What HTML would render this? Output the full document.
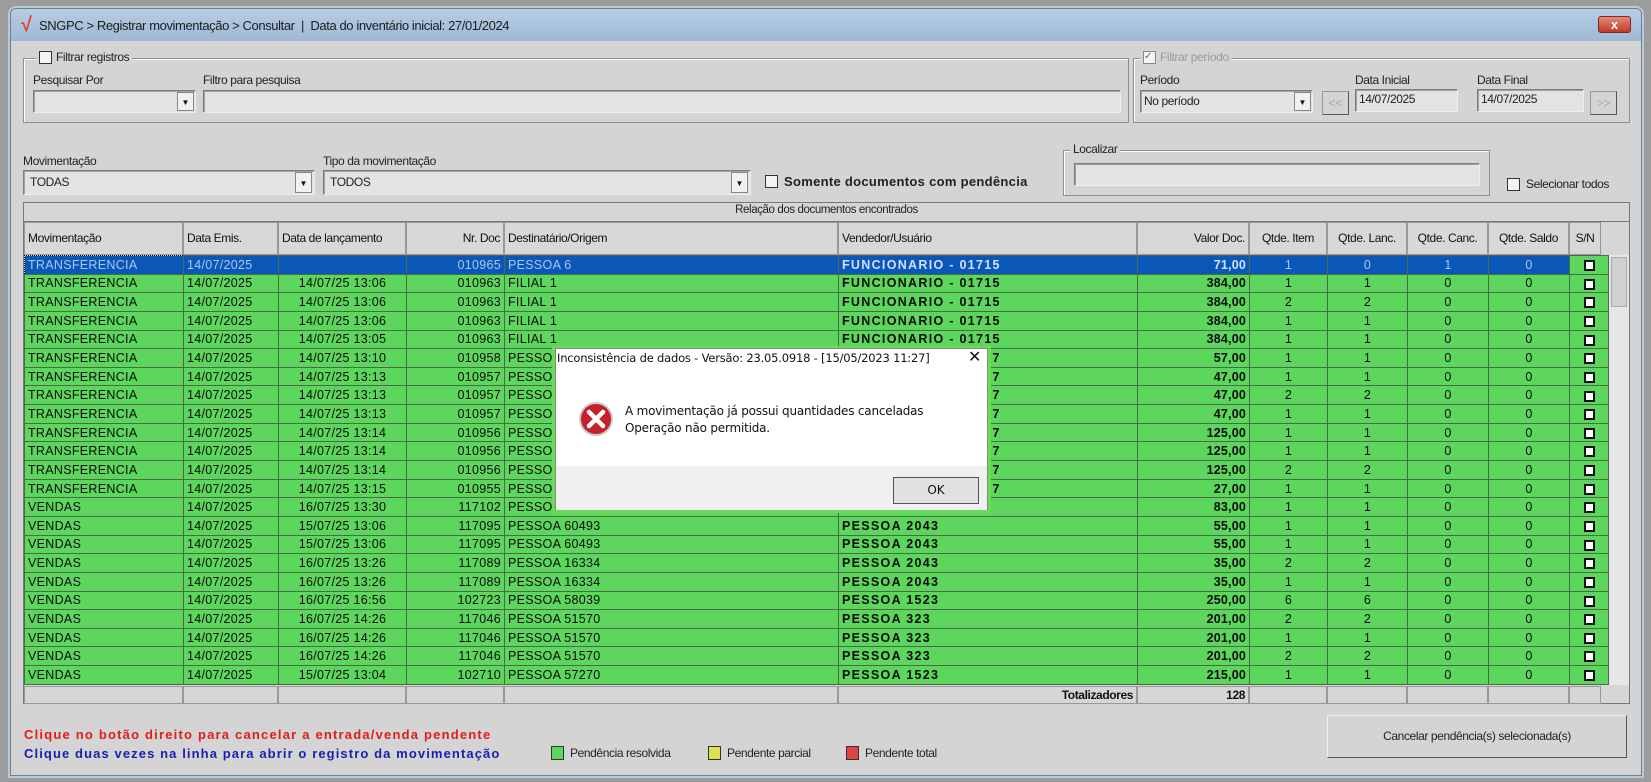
<!DOCTYPE html>
<html><head><meta charset="utf-8"><style>
*{box-sizing:border-box;margin:0;padding:0}
body{width:1651px;height:782px;background:#9c9c9c;position:relative;overflow:hidden;font-family:"Liberation Sans",sans-serif;font-size:12px;color:#111}
.a{position:absolute}
#win{left:10px;top:8px;width:1632px;height:768px;background:#d4d4d4;border:1px solid #6e7f90;border-radius:6px 6px 0 0;box-shadow:0 0 0 2px #b9c9d8}
#title{left:0;top:0;width:100%;height:32px;background:linear-gradient(#b9cde4,#9db8d6);border-radius:5px 5px 0 0}
.lbl{font-size:12px;letter-spacing:-.4px;color:#222;white-space:nowrap}
.grp{border:1px solid #8f8f8f;box-shadow:inset 1px 1px 0 #fff}
.box{background:#e3e3e3;border:1px solid #7d7d7d;border-right-color:#eee;border-bottom-color:#eee;box-shadow:inset 1px 1px 0 #a0a0a0}
.dd{background:#f1f1f1;border:1px solid #888;width:17px;font-size:8px;text-align:center}
.cb{width:13px;height:13px;border:1px solid #333;background:#f4f4f4}
table{border-collapse:collapse;table-layout:fixed;font-size:12.5px}
td{height:18.65px;border:1px solid #4a6a4a;padding:0 3px;white-space:nowrap;overflow:hidden;line-height:16px;letter-spacing:.3px;color:#0a0a0a}
tr.g td{background:#5cd65c}
tr.s td{background:#0b57b8;color:#a9c8f0}
td.r{text-align:right}td.c{text-align:center}td.b{font-weight:bold;letter-spacing:1.3px}
td.r.b{letter-spacing:.2px}
td.sn{background:#5cd65c!important;text-align:center;padding:0}
.sq{display:inline-block;width:11px;height:11px;border:2px solid #111;background:#fff;vertical-align:middle}
.hd{background:#d8d8d8;border:1px solid #999;font-size:12px;letter-spacing:-.4px;line-height:30px;padding:0 3px;white-space:nowrap;overflow:hidden}
</style></head><body>
<div id="win" class="a">
 <div id="title" class="a">
  <div class="a" style="left:10px;top:6px;color:#e2462b;font-size:20px;font-weight:bold;line-height:20px">√</div>
  <div class="a lbl" style="left:28px;top:9px;font-size:13px;color:#1d1d1d">SNGPC &gt; Registrar movimentação &gt; Consultar &nbsp;| &nbsp;Data do inventário inicial: 27/01/2024</div>
  <div class="a" style="left:1587px;top:7px;width:33px;height:17px;background:linear-gradient(#e48a7a,#c0392b);border:1px solid #7a2a20;border-radius:3px;color:#fff;font-weight:bold;text-align:center;line-height:15px;font-size:13px">x</div>
 </div>
</div>
<div class="a grp" style="left:23px;top:58px;width:1106px;height:65px"></div>
<div class="a" style="left:36px;top:50px;background:#d4d4d4;padding:0 3px;display:flex;gap:4px;align-items:center"><div class="cb"></div><span class="lbl">Filtrar registros</span></div>
<div class="a lbl" style="left:33px;top:73px">Pesquisar Por</div>
<div class="a box" style="left:33px;top:90px;width:163px;height:23px"></div>
<div class="a dd" style="left:177px;top:92px;height:19px;line-height:19px">▼</div>
<div class="a lbl" style="left:203px;top:73px">Filtro para pesquisa</div>
<div class="a box" style="left:203px;top:90px;width:918px;height:23px"></div>
<div class="a grp" style="left:1133px;top:58px;width:497px;height:65px"></div>
<div class="a" style="left:1140px;top:50px;background:#d4d4d4;padding:0 3px;display:flex;gap:4px;align-items:center"><div class="cb" style="border-color:#888;font-size:10px;line-height:10px;color:#666">✓</div><span class="lbl" style="color:#9a9a9a">Filtrar período</span></div>
<div class="a lbl" style="left:1140px;top:73px">Período</div>
<div class="a box" style="left:1140px;top:90px;width:173px;height:23px;padding:3px 3px" ><span class="lbl">No período</span></div>
<div class="a dd" style="left:1294px;top:92px;height:19px;line-height:19px">▼</div>
<div class="a" style="left:1322px;top:91px;width:27px;height:24px;border:1px solid #999;border-right-color:#555;border-bottom-color:#555;color:#aaa;text-align:center;line-height:22px">&lt;&lt;</div>
<div class="a lbl" style="left:1355px;top:73px">Data Inicial</div>
<div class="a box" style="left:1355px;top:89px;width:103px;height:23px;padding:2px 3px"><span class="lbl">14/07/2025</span></div>
<div class="a lbl" style="left:1477px;top:73px">Data Final</div>
<div class="a box" style="left:1477px;top:89px;width:107px;height:23px;padding:2px 3px"><span class="lbl">14/07/2025</span></div>
<div class="a" style="left:1590px;top:91px;width:27px;height:24px;border:1px solid #999;border-right-color:#555;border-bottom-color:#555;color:#aaa;text-align:center;line-height:22px">&gt;&gt;</div>
<div class="a lbl" style="left:23px;top:154px">Movimentação</div>
<div class="a box" style="left:23px;top:170px;width:292px;height:25px;padding:4px 6px"><span class="lbl">TODAS</span></div>
<div class="a dd" style="left:295px;top:172px;height:21px;line-height:21px">▼</div>
<div class="a lbl" style="left:323px;top:154px">Tipo da movimentação</div>
<div class="a box" style="left:323px;top:170px;width:428px;height:25px;padding:4px 6px"><span class="lbl">TODOS</span></div>
<div class="a dd" style="left:731px;top:172px;height:21px;line-height:21px">▼</div>
<div class="a cb" style="left:765px;top:175px"></div>
<div class="a lbl" style="left:784px;top:174px;font-weight:bold;font-size:13px;letter-spacing:.3px">Somente documentos com pendência</div>
<div class="a grp" style="left:1063px;top:150px;width:427px;height:46px"></div>
<div class="a lbl" style="left:1070px;top:142px;background:#d4d4d4;padding:0 3px">Localizar</div>
<div class="a box" style="left:1074px;top:163px;width:406px;height:23px"></div>
<div class="a cb" style="left:1507px;top:178px"></div>
<div class="a lbl" style="left:1526px;top:177px">Selecionar todos</div>
<div class="a" style="left:23px;top:202px;width:1607px;height:502px;border:1px solid #777;background:#d6d6d6"></div>
<div class="a lbl" style="left:23px;top:204px;width:1607px;text-align:center;font-size:11.5px">Relação dos documentos encontrados</div>
<div class="a" style="left:23px;top:221px;width:1607px;height:1px;background:#777"></div>
<div class="a" style="left:24px;top:222px;display:flex;height:33px">
<div class="hd" style="width:159px">Movimentação</div><div class="hd" style="width:95px">Data Emis.</div><div class="hd" style="width:128px">Data de lançamento</div><div class="hd" style="width:98px;text-align:right">Nr. Doc</div><div class="hd" style="width:334px">Destinatário/Origem</div><div class="hd" style="width:299px">Vendedor/Usuário</div><div class="hd" style="width:112px;text-align:right">Valor Doc.</div><div class="hd" style="width:78px;text-align:center">Qtde. Item</div><div class="hd" style="width:80px;text-align:center">Qtde. Lanc.</div><div class="hd" style="width:81px;text-align:center">Qtde. Canc.</div><div class="hd" style="width:81px;text-align:center">Qtde. Saldo</div><div class="hd" style="width:32px;text-align:center">S/N</div>
</div>
<div class="a" style="left:1608px;top:255px;width:21px;height:430px;background:#e6e6e6;border-left:1px solid #bbb"><div style="margin:2px;height:50px;background:#d0d0d0;border:1px solid #aaa"></div></div>
<table class="a" style="left:24px;top:255px;width:1584px">
<colgroup><col style="width:159px"><col style="width:95px"><col style="width:128px"><col style="width:98px"><col style="width:334px"><col style="width:299px"><col style="width:112px"><col style="width:78px"><col style="width:80px"><col style="width:81px"><col style="width:81px"><col style="width:39px"></colgroup>
<tr class="s"><td style="border:1px dotted #000">TRANSFERENCIA</td><td>14/07/2025</td><td></td><td class="r">010965</td><td>PESSOA 6</td><td class="b" style="color:#cfe0ff">FUNCIONARIO - 01715</td><td class="r b" style="color:#cfe0ff">71,00</td><td class="c">1</td><td class="c">0</td><td class="c">1</td><td class="c">0</td><td class="sn"><span class="sq"></span></td></tr>
<tr class="g"><td>TRANSFERENCIA</td><td>14/07/2025</td><td class="c">14/07/25 13:06</td><td class="r">010963</td><td>FILIAL 1</td><td class="b">FUNCIONARIO - 01715</td><td class="r b">384,00</td><td class="c">1</td><td class="c">1</td><td class="c">0</td><td class="c">0</td><td class="sn"><span class="sq"></span></td></tr>
<tr class="g"><td>TRANSFERENCIA</td><td>14/07/2025</td><td class="c">14/07/25 13:06</td><td class="r">010963</td><td>FILIAL 1</td><td class="b">FUNCIONARIO - 01715</td><td class="r b">384,00</td><td class="c">2</td><td class="c">2</td><td class="c">0</td><td class="c">0</td><td class="sn"><span class="sq"></span></td></tr>
<tr class="g"><td>TRANSFERENCIA</td><td>14/07/2025</td><td class="c">14/07/25 13:06</td><td class="r">010963</td><td>FILIAL 1</td><td class="b">FUNCIONARIO - 01715</td><td class="r b">384,00</td><td class="c">1</td><td class="c">1</td><td class="c">0</td><td class="c">0</td><td class="sn"><span class="sq"></span></td></tr>
<tr class="g"><td>TRANSFERENCIA</td><td>14/07/2025</td><td class="c">14/07/25 13:05</td><td class="r">010963</td><td>FILIAL 1</td><td class="b">FUNCIONARIO - 01715</td><td class="r b">384,00</td><td class="c">1</td><td class="c">1</td><td class="c">0</td><td class="c">0</td><td class="sn"><span class="sq"></span></td></tr>
<tr class="g"><td>TRANSFERENCIA</td><td>14/07/2025</td><td class="c">14/07/25 13:10</td><td class="r">010958</td><td>PESSOA 1</td><td class="b">FUNCIONARIO - 01587</td><td class="r b">57,00</td><td class="c">1</td><td class="c">1</td><td class="c">0</td><td class="c">0</td><td class="sn"><span class="sq"></span></td></tr>
<tr class="g"><td>TRANSFERENCIA</td><td>14/07/2025</td><td class="c">14/07/25 13:13</td><td class="r">010957</td><td>PESSOA 1</td><td class="b">FUNCIONARIO - 01587</td><td class="r b">47,00</td><td class="c">1</td><td class="c">1</td><td class="c">0</td><td class="c">0</td><td class="sn"><span class="sq"></span></td></tr>
<tr class="g"><td>TRANSFERENCIA</td><td>14/07/2025</td><td class="c">14/07/25 13:13</td><td class="r">010957</td><td>PESSOA 1</td><td class="b">FUNCIONARIO - 01587</td><td class="r b">47,00</td><td class="c">2</td><td class="c">2</td><td class="c">0</td><td class="c">0</td><td class="sn"><span class="sq"></span></td></tr>
<tr class="g"><td>TRANSFERENCIA</td><td>14/07/2025</td><td class="c">14/07/25 13:13</td><td class="r">010957</td><td>PESSOA 1</td><td class="b">FUNCIONARIO - 01587</td><td class="r b">47,00</td><td class="c">1</td><td class="c">1</td><td class="c">0</td><td class="c">0</td><td class="sn"><span class="sq"></span></td></tr>
<tr class="g"><td>TRANSFERENCIA</td><td>14/07/2025</td><td class="c">14/07/25 13:14</td><td class="r">010956</td><td>PESSOA 1</td><td class="b">FUNCIONARIO - 01587</td><td class="r b">125,00</td><td class="c">1</td><td class="c">1</td><td class="c">0</td><td class="c">0</td><td class="sn"><span class="sq"></span></td></tr>
<tr class="g"><td>TRANSFERENCIA</td><td>14/07/2025</td><td class="c">14/07/25 13:14</td><td class="r">010956</td><td>PESSOA 1</td><td class="b">FUNCIONARIO - 01587</td><td class="r b">125,00</td><td class="c">1</td><td class="c">1</td><td class="c">0</td><td class="c">0</td><td class="sn"><span class="sq"></span></td></tr>
<tr class="g"><td>TRANSFERENCIA</td><td>14/07/2025</td><td class="c">14/07/25 13:14</td><td class="r">010956</td><td>PESSOA 1</td><td class="b">FUNCIONARIO - 01587</td><td class="r b">125,00</td><td class="c">2</td><td class="c">2</td><td class="c">0</td><td class="c">0</td><td class="sn"><span class="sq"></span></td></tr>
<tr class="g"><td>TRANSFERENCIA</td><td>14/07/2025</td><td class="c">14/07/25 13:15</td><td class="r">010955</td><td>PESSOA 1</td><td class="b">FUNCIONARIO - 01587</td><td class="r b">27,00</td><td class="c">1</td><td class="c">1</td><td class="c">0</td><td class="c">0</td><td class="sn"><span class="sq"></span></td></tr>
<tr class="g"><td>VENDAS</td><td>14/07/2025</td><td class="c">16/07/25 13:30</td><td class="r">117102</td><td>PESSOA 27034</td><td class="b">PESSOA 2043</td><td class="r b">83,00</td><td class="c">1</td><td class="c">1</td><td class="c">0</td><td class="c">0</td><td class="sn"><span class="sq"></span></td></tr>
<tr class="g"><td>VENDAS</td><td>14/07/2025</td><td class="c">15/07/25 13:06</td><td class="r">117095</td><td>PESSOA 60493</td><td class="b">PESSOA 2043</td><td class="r b">55,00</td><td class="c">1</td><td class="c">1</td><td class="c">0</td><td class="c">0</td><td class="sn"><span class="sq"></span></td></tr>
<tr class="g"><td>VENDAS</td><td>14/07/2025</td><td class="c">15/07/25 13:06</td><td class="r">117095</td><td>PESSOA 60493</td><td class="b">PESSOA 2043</td><td class="r b">55,00</td><td class="c">1</td><td class="c">1</td><td class="c">0</td><td class="c">0</td><td class="sn"><span class="sq"></span></td></tr>
<tr class="g"><td>VENDAS</td><td>14/07/2025</td><td class="c">16/07/25 13:26</td><td class="r">117089</td><td>PESSOA 16334</td><td class="b">PESSOA 2043</td><td class="r b">35,00</td><td class="c">2</td><td class="c">2</td><td class="c">0</td><td class="c">0</td><td class="sn"><span class="sq"></span></td></tr>
<tr class="g"><td>VENDAS</td><td>14/07/2025</td><td class="c">16/07/25 13:26</td><td class="r">117089</td><td>PESSOA 16334</td><td class="b">PESSOA 2043</td><td class="r b">35,00</td><td class="c">1</td><td class="c">1</td><td class="c">0</td><td class="c">0</td><td class="sn"><span class="sq"></span></td></tr>
<tr class="g"><td>VENDAS</td><td>14/07/2025</td><td class="c">16/07/25 16:56</td><td class="r">102723</td><td>PESSOA 58039</td><td class="b">PESSOA 1523</td><td class="r b">250,00</td><td class="c">6</td><td class="c">6</td><td class="c">0</td><td class="c">0</td><td class="sn"><span class="sq"></span></td></tr>
<tr class="g"><td>VENDAS</td><td>14/07/2025</td><td class="c">16/07/25 14:26</td><td class="r">117046</td><td>PESSOA 51570</td><td class="b">PESSOA 323</td><td class="r b">201,00</td><td class="c">2</td><td class="c">2</td><td class="c">0</td><td class="c">0</td><td class="sn"><span class="sq"></span></td></tr>
<tr class="g"><td>VENDAS</td><td>14/07/2025</td><td class="c">16/07/25 14:26</td><td class="r">117046</td><td>PESSOA 51570</td><td class="b">PESSOA 323</td><td class="r b">201,00</td><td class="c">1</td><td class="c">1</td><td class="c">0</td><td class="c">0</td><td class="sn"><span class="sq"></span></td></tr>
<tr class="g"><td>VENDAS</td><td>14/07/2025</td><td class="c">16/07/25 14:26</td><td class="r">117046</td><td>PESSOA 51570</td><td class="b">PESSOA 323</td><td class="r b">201,00</td><td class="c">2</td><td class="c">2</td><td class="c">0</td><td class="c">0</td><td class="sn"><span class="sq"></span></td></tr>
<tr class="g"><td>VENDAS</td><td>14/07/2025</td><td class="c">15/07/25 13:04</td><td class="r">102710</td><td>PESSOA 57270</td><td class="b">PESSOA 1523</td><td class="r b">215,00</td><td class="c">1</td><td class="c">1</td><td class="c">0</td><td class="c">0</td><td class="sn"><span class="sq"></span></td></tr>
</table>
<div class="a" style="left:24px;top:686px;display:flex;height:18px">
<div class="hd" style="width:159px;line-height:16px;background:#d6d6d6"></div><div class="hd" style="width:95px;background:#d6d6d6"></div><div class="hd" style="width:128px;background:#d6d6d6"></div><div class="hd" style="width:98px;background:#d6d6d6"></div><div class="hd" style="width:334px;background:#d6d6d6"></div><div class="hd" style="width:299px;text-align:right;line-height:16px;font-weight:bold;background:#d6d6d6">Totalizadores</div><div class="hd" style="width:112px;text-align:right;line-height:16px;font-weight:bold;background:#d6d6d6">128</div><div class="hd" style="width:78px;background:#d6d6d6"></div><div class="hd" style="width:80px;background:#d6d6d6"></div><div class="hd" style="width:81px;background:#d6d6d6"></div><div class="hd" style="width:81px;background:#d6d6d6"></div><div class="hd" style="width:32px;background:#d6d6d6"></div>
</div>
<div class="a lbl" style="left:24px;top:727px;color:#e01c1c;font-weight:bold;font-size:13px;letter-spacing:1.2px">Clique no botão direito para cancelar a entrada/venda pendente</div>
<div class="a lbl" style="left:24px;top:746px;color:#1c1cb0;font-weight:bold;font-size:13px;letter-spacing:1.1px">Clique duas vezes na linha para abrir o registro da movimentação</div>
<div class="a" style="left:551px;top:746px;width:13px;height:14px;background:#5cd65c;border:1px solid #333"></div>
<div class="a lbl" style="left:570px;top:746px">Pendência resolvida</div>
<div class="a" style="left:708px;top:746px;width:13px;height:14px;background:#e0e050;border:1px solid #333"></div>
<div class="a lbl" style="left:727px;top:746px">Pendente parcial</div>
<div class="a" style="left:846px;top:746px;width:13px;height:14px;background:#dd4444;border:1px solid #333"></div>
<div class="a lbl" style="left:865px;top:746px">Pendente total</div>
<div class="a" style="left:1327px;top:715px;width:300px;height:43px;border:1px solid #eee;border-right-color:#555;border-bottom-color:#555;background:#d4d4d4;text-align:center;line-height:41px"><span class="lbl">Cancelar pendência(s) selecionada(s)</span></div>
<div class="a" style="left:552px;top:346px;width:439px;height:167px;background:#66dd55"></div>
<div class="a" style="left:555px;top:348px;width:433px;height:162px;background:#fff;border:1px solid #888">
 <div class="a" style="left:0;top:0;width:100%;height:20px;font-family:'DejaVu Sans',sans-serif;font-size:11.5px;line-height:18px;padding-left:1px;color:#111;white-space:nowrap;letter-spacing:-.2px">Inconsistência de dados - Versão: 23.05.0918 - [15/05/2023 11:27]</div>
 <div class="a" style="left:412px;top:0;font-size:16px;line-height:18px">✕</div>
 <svg class="a" style="left:22px;top:52px" width="36" height="36" viewBox="0 0 36 36"><circle cx="18" cy="18" r="17" fill="#c9c9c9"/><circle cx="18" cy="18" r="15" fill="#c8202a"/><path d="M11 11 L25 25 M25 11 L11 25" stroke="#fff" stroke-width="4.5" stroke-linecap="round"/></svg>
 <div class="a" style="left:69px;top:54px;font-family:'DejaVu Sans',sans-serif;font-size:12px;line-height:17px;color:#111;white-space:nowrap;letter-spacing:-.2px">A movimentação já possui quantidades canceladas<br>Operação não permitida.</div>
 <div class="a" style="left:0;top:117px;width:100%;height:44px;background:#f0f0f0"></div>
 <div class="a" style="left:337px;top:128px;width:86px;height:27px;border:1px solid #555;background:#e1e1e1;text-align:center;line-height:25px;font-family:'DejaVu Sans',sans-serif;font-size:12px">OK</div>
</div>
</body></html>
